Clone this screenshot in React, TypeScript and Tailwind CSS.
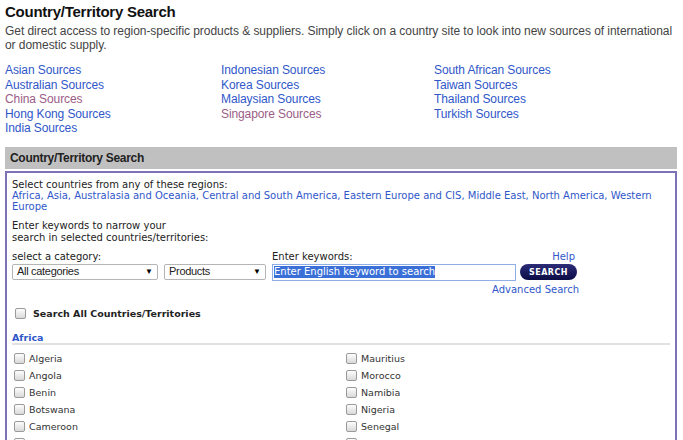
import React from "react";

const sourceCols: { name: string; visited?: boolean }[][] = [
  [
    { name: "Asian Sources" },
    { name: "Australian Sources" },
    { name: "China Sources", visited: true },
    { name: "Hong Kong Sources" },
    { name: "India Sources" },
  ],
  [
    { name: "Indonesian Sources" },
    { name: "Korea Sources" },
    { name: "Malaysian Sources" },
    { name: "Singapore Sources", visited: true },
  ],
  [
    { name: "South African Sources" },
    { name: "Taiwan Sources" },
    { name: "Thailand Sources" },
    { name: "Turkish Sources" },
  ],
];

const africaLeft = ["Algeria", "Angola", "Benin", "Botswana", "Cameroon"];
const africaRight = ["Mauritius", "Morocco", "Namibia", "Nigeria", "Senegal"];

function Check() {
  return (
    <span className="inline-block w-[11px] h-[11px] rounded-[2px] border border-[#9a9a9a] bg-gradient-to-b from-[#fdfdfd] to-[#d9d9d9] shrink-0" />
  );
}

function Arrow() {
  return <span className="text-[8px] leading-none text-black">▼</span>;
}

export default function App() {
  return (
    <div className="w-[683px] h-[440px] overflow-hidden bg-white font-['Liberation_Sans',Arial,sans-serif] text-[#333]">
      {/* Header */}
      <div className="px-[5px] pt-[2px]">
        <h1 className="text-[15px] font-bold text-[#111] leading-[20px] tracking-[-0.25px]">
          Country/Territory Search
        </h1>
        <p className="text-[12px] leading-[14px] text-[#444] tracking-[-0.05px] mt-[2px] pr-[2px]">
          Get direct access to region-specific products &amp; suppliers. Simply click on a country site to look into new sources of international or domestic supply.
        </p>
      </div>

      {/* Source links */}
      <div className="flex mt-[11px] px-[5px] text-[12px] leading-[14.5px] tracking-[-0.1px]">
        {sourceCols.map((col, i) => (
          <div key={i} className={i === 0 ? "w-[216px]" : i === 1 ? "w-[213px]" : "flex-1"}>
            {col.map((s) => (
              <div key={s.name} className={s.visited ? "text-[#9b5c86]" : "text-[#2f57c9]"}>
                {s.name}
              </div>
            ))}
          </div>
        ))}
      </div>

      {/* Search panel */}
      <div className="mx-[5px] mt-[11px] w-[672px]">
        <div className="h-[22px] bg-[#c0c0c0] flex items-center pl-[5px] text-[12px] font-bold text-[#222] tracking-[-0.3px]">
          Country/Territory Search
        </div>
        <div className="mt-[2px] border-2 border-[#7b73b6] h-[300px] px-[5px] pt-[6px] font-['DejaVu_Sans',Verdana,sans-serif] text-[10px] leading-[11px] text-[#222]">
          <div>Select countries from any of these regions:</div>
          <div className="text-[#2f57c9] pr-[12px]">
            Africa, Asia, Australasia and Oceania, Central and South America, Eastern Europe and CIS, Middle East, North America, Western Europe
          </div>

          <div className="mt-[8px] leading-[12px]">
            Enter keywords to narrow your
            <br />
            search in selected countries/territories:
          </div>

          <div className="flex mt-[7px]">
            <div className="w-[260px]">
              <div>select a category:</div>
              <div className="flex gap-[6px] mt-[2px] font-['Liberation_Sans',Arial,sans-serif] text-[11px] text-[#222]">
                <div className="w-[146px] h-[16px] border border-[#b5b5b5] rounded-[2px] flex items-center justify-between px-[4px] bg-white">
                  <span className="tracking-[-0.3px]">All categories</span>
                  <Arrow />
                </div>
                <div className="w-[102px] h-[16px] border border-[#b5b5b5] rounded-[2px] flex items-center justify-between px-[4px] bg-white">
                  <span className="tracking-[-0.3px]">Products</span>
                  <Arrow />
                </div>
              </div>
            </div>
            <div className="w-[310px]">
              <div className="flex justify-between pr-[7px]">
                <span>Enter keywords:</span>
                <span className="text-[#2f57c9]">Help</span>
              </div>
              <div className="flex items-center gap-[4px] mt-[2px]">
                <div className="w-[244px] h-[17px] border border-[#8faee6] flex items-center px-[1px] bg-white">
                  <span className="bg-[#3a6fd8] text-white leading-[12px]">Enter English keyword to search</span>
                </div>
                <div className="w-[57px] h-[16px] rounded-full bg-gradient-to-b from-[#2c2c78] to-[#0c0c45] text-white font-bold text-[8px] flex items-center justify-center tracking-[0.5px]">
                  SEARCH
                </div>
              </div>
              <div className="text-right pr-[3px] mt-[3px] text-[#2f57c9]">Advanced Search</div>
            </div>
          </div>

          <div className="flex items-center mt-[13px] pl-[3px]">
            <Check />
            <span className="ml-[7px] font-bold text-[9.5px]">Search All Countries/Territories</span>
          </div>

          <div className="mt-[13px] text-[#2f57c9] font-bold text-[9.5px]">Africa</div>
          <div className="h-[2px] bg-[#e2e2e2]" />

          <div className="flex mt-[5px] pl-[2px] text-[9.5px]">
            <div className="w-[332px]">
              {africaLeft.map((c) => (
                <div key={c} className="flex items-center h-[17px]">
                  <Check />
                  <span className="ml-[4px] text-[#333]">{c}</span>
                </div>
              ))}
              <div className="flex items-center h-[17px]">
                <Check />
              </div>
            </div>
            <div>
              {africaRight.map((c) => (
                <div key={c} className="flex items-center h-[17px]">
                  <Check />
                  <span className="ml-[4px] text-[#333]">{c}</span>
                </div>
              ))}
              <div className="flex items-center h-[17px]">
                <Check />
              </div>
            </div>
          </div>
        </div>
      </div>
    </div>
  );
}
